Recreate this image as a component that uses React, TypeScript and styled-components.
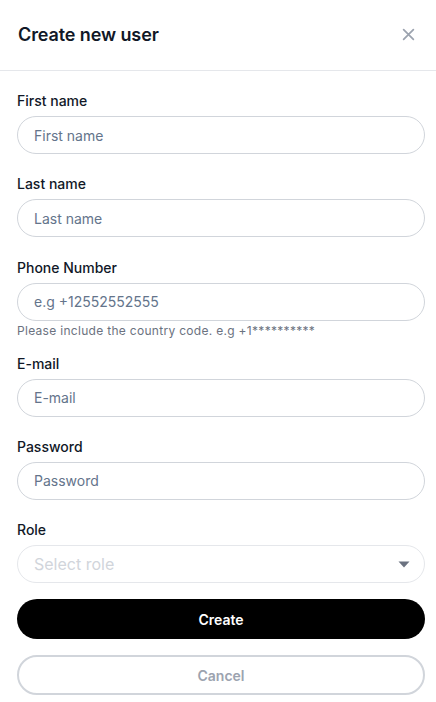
import React from "react";
import styled, { createGlobalStyle } from "styled-components";

const Global = createGlobalStyle`
  html, body { margin: 0; padding: 0; background: #fff; }
  body { font-family: Inter, "Noto Sans", Arial, sans-serif; color: #111827; }
  * { box-sizing: border-box; }
`;

const Panel = styled.div`
  width: 436px;
  min-height: 702px;
  background: #fff;
  display: flex;
  flex-direction: column;
`;

const Header = styled.div`
  height: 71px;
  display: flex;
  align-items: center;
  justify-content: space-between;
  padding: 0 18px 2px 18px;
  border-bottom: 1px solid #e5e7eb;
`;

const Title = styled.h2`
  margin: 0;
  font-size: 18px;
  font-weight: 600;
  color: #111827;
  letter-spacing: -0.1px;
`;

const CloseButton = styled.button`
  border: none;
  background: none;
  padding: 0;
  width: 20px;
  height: 20px;
  display: flex;
  align-items: center;
  justify-content: center;
  color: #9ca3af;
  cursor: pointer;
`;

const Form = styled.form`
  display: flex;
  flex-direction: column;
  padding: 20px 11px 0 17px;
`;

const Field = styled.div<{ $mb?: number }>`
  display: flex;
  flex-direction: column;
  margin-bottom: ${(p) => p.$mb ?? 20.3}px;
`;

const Label = styled.label`
  font-size: 14px;
  font-weight: 500;
  line-height: 20px;
  color: #111827;
  margin-bottom: 5px;
`;

const Input = styled.input`
  width: 408px;
  height: 38px;
  border: 1px solid #d1d5db;
  border-radius: 999px;
  padding: 0 16px;
  font-family: inherit;
  font-size: 14px;
  color: #111827;
  outline: none;
  &::placeholder { color: #64748b; }
`;

const Help = styled.div`
  font-size: 12px;
  line-height: 17px;
  letter-spacing: 0.3px;
  color: #6b7280;
  margin-top: 1px;
`;

const SelectBox = styled.div`
  width: 408px;
  height: 38px;
  border: 1px solid #e5e7eb;
  border-radius: 999px;
  padding: 0 14px 0 16px;
  display: flex;
  align-items: center;
  justify-content: space-between;
  font-size: 16px;
  color: #d1d5db;
`;

const Button = styled.button<{ $primary?: boolean }>`
  width: 408px;
  height: 40px;
  border-radius: 999px;
  font-family: inherit;
  font-size: 14px;
  font-weight: 600;
  cursor: pointer;
  background: ${(p) => (p.$primary ? "#000" : "#fff")};
  color: ${(p) => (p.$primary ? "#fff" : "#9ca3af")};
  border: ${(p) => (p.$primary ? "none" : "2px solid #d1d5db")};
`;

const Actions = styled.div`
  display: flex;
  flex-direction: column;
  gap: 16px;
  margin-top: -4px;
`;

export default function App() {
  return (
    <>
      <Global />
      <Panel>
        <Header>
          <Title>Create new user</Title>
          <CloseButton aria-label="Close">
            <svg width="13" height="13" viewBox="0 0 12 12" fill="none" stroke="currentColor" strokeWidth="1.6" strokeLinecap="round">
              <path d="M1.5 1.5l9 9M10.5 1.5l-9 9" />
            </svg>
          </CloseButton>
        </Header>
        <Form onSubmit={(e) => e.preventDefault()}>
          <Field>
            <Label>First name</Label>
            <Input placeholder="First name" />
          </Field>
          <Field>
            <Label>Last name</Label>
            <Input placeholder="Last name" />
          </Field>
          <Field $mb={15}>
            <Label>Phone Number</Label>
            <Input placeholder="e.g +12552552555" />
            <Help>Please include the country code. e.g +1**********</Help>
          </Field>
          <Field>
            <Label>E-mail</Label>
            <Input placeholder="E-mail" />
          </Field>
          <Field>
            <Label>Password</Label>
            <Input placeholder="Password" type="password" />
          </Field>
          <Field>
            <Label>Role</Label>
            <SelectBox>
              <span>Select role</span>
              <svg width="12" height="7" viewBox="0 0 12 7">
                <path d="M0.5 0.5h11L6 6.5z" fill="#6b7280" />
              </svg>
            </SelectBox>
          </Field>
          <Actions>
            <Button $primary type="button">Create</Button>
            <Button type="button">Cancel</Button>
          </Actions>
        </Form>
      </Panel>
    </>
  );
}
